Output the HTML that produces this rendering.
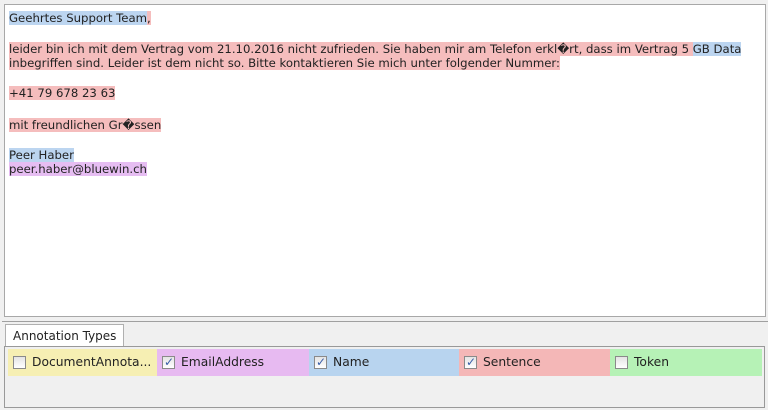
<!DOCTYPE html>
<html><head><style>
body{margin:0;width:768px;height:410px;background:#f0f0f0;font-family:"DejaVu Sans","Liberation Sans",sans-serif;font-size:11.7px;color:#222;position:relative;overflow:hidden}
#doc{position:absolute;left:4px;top:4px;width:760px;height:311px;background:#fff;border:1px solid #a8a8a8}
.l{position:absolute;left:4px;white-space:nowrap;line-height:15px}
.r{background:#f5bdbd}.b{background:#bcd5f0}.p{background:#e6bdf2}
#sep{position:absolute;left:2px;top:321px;width:766px;height:1px;background:#a0a0a0}
#tab{position:absolute;left:5px;top:324px;width:119px;height:22px;background:#fff;border:1px solid #b0b0b0;border-bottom:none;box-sizing:border-box;padding:4px 0 0 7px;font-size:12px}
#pan{position:absolute;left:4px;top:346px;width:761px;height:62px;border:1px solid #999;box-sizing:border-box;background:#f0f0f0}
.c{position:absolute;top:349px;height:27px;line-height:27px;font-size:12.3px}
.cb{display:inline-block;width:13px;height:13px;border:1px solid #8a8a8a;background:linear-gradient(#e4e4e4,#fff);vertical-align:-3px;margin:0 6px 0 5px;position:relative;box-sizing:border-box}
.cb.k::after{content:"✓";position:absolute;left:1px;top:-8px;color:#3a5ea8;font-size:12px;font-weight:bold}
</style></head><body>
<div id="doc">
<div class="l" style="top:6px"><span class="b">Geehrtes Support Team</span><span class="r">,</span></div>
<div class="l" style="top:37px"><span class="r">leider bin ich mit dem Vertrag vom 21.10.2016 nicht zufrieden. Sie haben mir am Telefon erkl�rt, dass im Vertrag 5 </span><span class="b">GB Data</span></div>
<div class="l" style="top:51px"><span class="r">inbegriffen sind. Leider ist dem nicht so. Bitte kontaktieren Sie mich unter folgender Nummer:</span></div>
<div class="l" style="top:81px"><span class="r">+41 79 678 23 63</span></div>
<div class="l" style="top:113px"><span class="r">mit freundlichen Gr�ssen</span></div>
<div class="l" style="top:143px"><span class="b">Peer Haber</span></div>
<div class="l" style="top:157px"><span class="p">peer.haber@bluewin.ch</span></div>
</div>
<div id="sep"></div>
<div id="tab">Annotation Types</div>
<div id="pan"></div>
<div class="c" style="left:8px;width:149px;background:#f6efb3"><span class="cb"></span>DocumentAnnota...</div>
<div class="c" style="left:157px;width:152px;background:#e7baf1"><span class="cb k"></span>EmailAddress</div>
<div class="c" style="left:309px;width:150px;background:#b8d4ef"><span class="cb k"></span>Name</div>
<div class="c" style="left:459px;width:151px;background:#f4b7b7"><span class="cb k"></span>Sentence</div>
<div class="c" style="left:610px;width:152px;background:#b6f2b6"><span class="cb"></span>Token</div>
</body></html>
